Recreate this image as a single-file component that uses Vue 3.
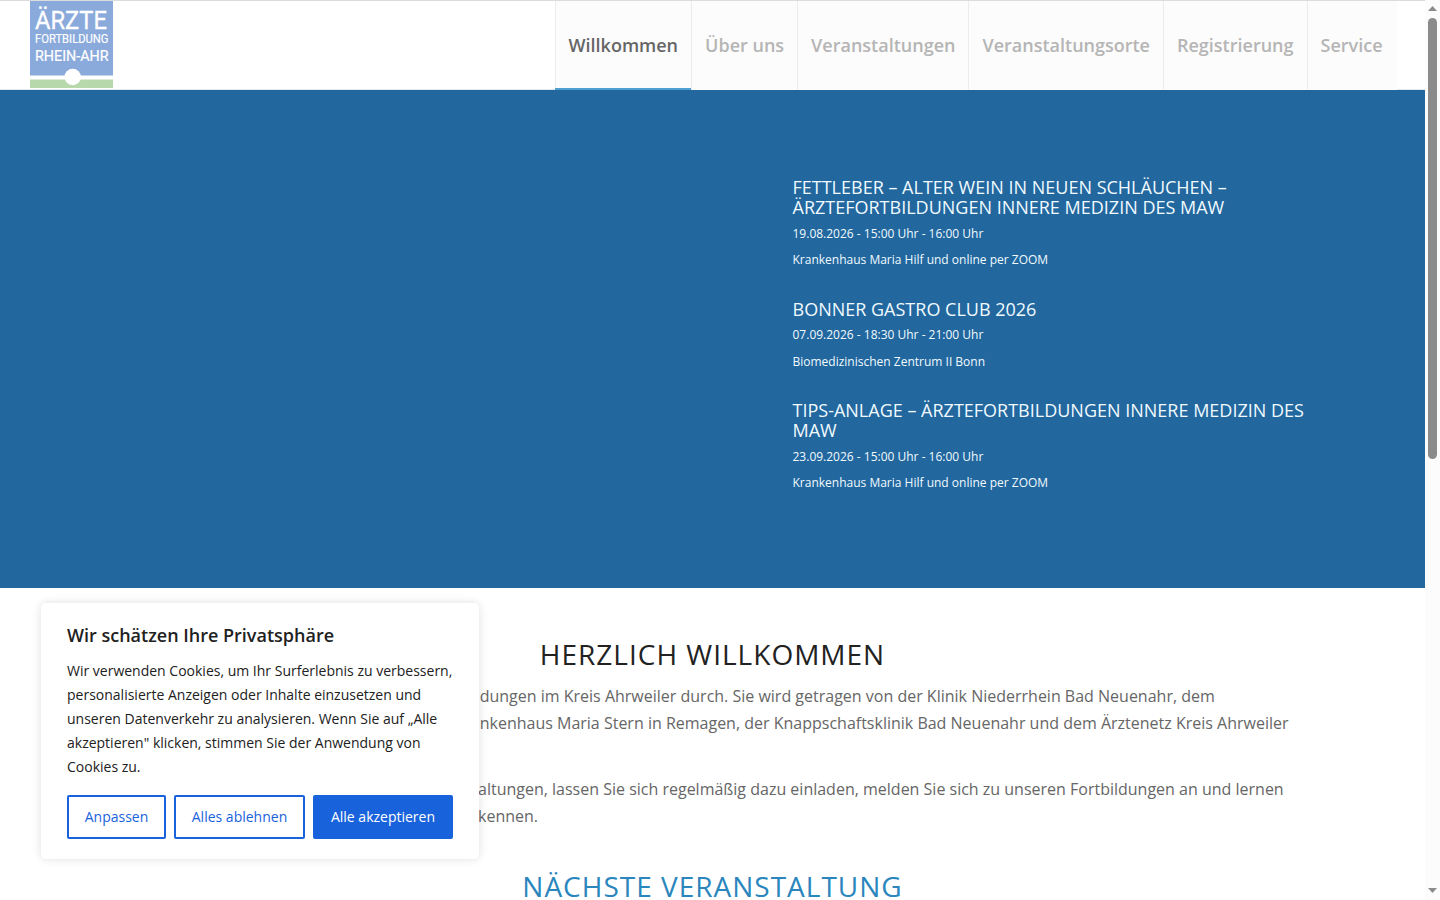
<script setup>
const nav = ['Willkommen', 'Über uns', 'Veranstaltungen', 'Veranstaltungsorte', 'Registrierung', 'Service']
const events = [
  { title: ['FETTLEBER – ALTER WEIN IN NEUEN SCHLÄUCHEN –', 'ÄRZTEFORTBILDUNGEN INNERE MEDIZIN DES MAW'], date: '19.08.2026 - 15:00 Uhr - 16:00 Uhr', place: 'Krankenhaus Maria Hilf und online per ZOOM' },
  { title: ['BONNER GASTRO CLUB 2026'], date: '07.09.2026 - 18:30 Uhr - 21:00 Uhr', place: 'Biomedizinischen Zentrum II Bonn' },
  { title: ['TIPS-ANLAGE – ÄRZTEFORTBILDUNGEN INNERE MEDIZIN DES', 'MAW'], date: '23.09.2026 - 15:00 Uhr - 16:00 Uhr', place: 'Krankenhaus Maria Hilf und online per ZOOM' },
]
const cookieText = ['Wir verwenden Cookies, um Ihr Surferlebnis zu verbessern,', 'personalisierte Anzeigen oder Inhalte einzusetzen und', 'unseren Datenverkehr zu analysieren. Wenn Sie auf „Alle', 'akzeptieren" klicken, stimmen Sie der Anwendung von', 'Cookies zu.']
</script>

<template>
  <div class="window">
    <div class="page">
      <header>
        <svg class="logo" width="84" height="88" viewBox="0 0 84 88">
          <rect x="0" y="1" width="83" height="74.500" fill="#8aaadb" />
          <rect x="0" y="79.500" width="83" height="8.500" fill="#b7d8ab" />
          <circle cx="42.700" cy="77" r="8.300" fill="#fff" />
          <g fill="#fff" font-family="Roboto, sans-serif">
            <text x="5" y="28.800" font-size="26.500" textLength="72" lengthAdjust="spacingAndGlyphs" stroke="#fff" stroke-width="0.300">ÄRZTE</text>
            <text x="5" y="43.200" font-size="12" textLength="73.500" lengthAdjust="spacingAndGlyphs" stroke="#fff" stroke-width="0.150">FORTBILDUNG</text>
            <text x="5" y="61" font-size="15" textLength="73.500" lengthAdjust="spacingAndGlyphs" stroke="#fff" stroke-width="0.200">RHEIN-AHR</text>
          </g>
        </svg>
        <nav>
          <a v-for="(n, i) in nav" :key="n" :class="{ active: i === 0 }">{{ n }}</a>
        </nav>
      </header>
      <section class="hero">
        <article v-for="e in events" :key="e.title[0]">
          <h3><span v-for="t in e.title" :key="t">{{ t }}</span></h3>
          <p>{{ e.date }}</p>
          <p>{{ e.place }}</p>
        </article>
      </section>
      <main>
        <h1>HERZLICH WILLKOMMEN</h1>
        <p class="body intro">
          <span>dungen im Kreis Ahrweiler durch. Sie wird getragen von der Klinik Niederrhein Bad Neuenahr, dem</span>
          <span>nkenhaus Maria Stern in Remagen, der Knappschaftsklinik Bad Neuenahr und dem Ärztenetz Kreis Ahrweiler</span>
        </p>
        <p class="body">
          <span>altungen, lassen Sie sich regelmäßig dazu einladen, melden Sie sich zu unseren Fortbildungen an und lernen</span>
          <span>kennen.</span>
        </p>
        <h1 class="next">NÄCHSTE VERANSTALTUNG</h1>
      </main>
    </div>
    <aside class="scroll">
      <svg width="15" height="900" viewBox="0 0 15 900">
        <path d="M3 11 L7.500 6 L12 11Z" fill="#8b8b8b" />
        <rect x="3" y="18" width="9" height="441" rx="4.500" fill="#8b8b8b" />
        <path d="M3 888 L12 888 L7.500 893Z" fill="#8b8b8b" />
      </svg>
    </aside>
    <div class="cookie">
      <h2>Wir schätzen Ihre Privatsphäre</h2>
      <p><span v-for="l in cookieText" :key="l">{{ l }}</span></p>
      <div class="buttons">
        <button class="b1">Anpassen</button>
        <button class="b2">Alles ablehnen</button>
        <button class="b3">Alle akzeptieren</button>
      </div>
    </div>
  </div>
</template>

<style>
body { margin: 0; overflow: hidden; }
</style>
<style scoped>
* { box-sizing: border-box; }
.window { position: relative; display: flex; width: 1440px; height: 900px; overflow: hidden; background: #fff; font-family: "Open Sans", sans-serif; }
.page { width: 1425px; height: 900px; overflow: hidden; }
h1, h2, h3, p { margin: 0; font-weight: 400; }
span { display: block; white-space: nowrap; }
header { height: 90px; display: flex; justify-content: space-between; padding: 0 28px 0 30px; border-top: 1px solid #dcdcdc; border-bottom: 1px solid #e4e8ec; }
.logo { display: block; margin-top: -1px; }
nav { display: flex; height: 89px; }
nav a { position: relative; padding: 0 13px; border-left: 1px solid #ececec; background: #fcfcfc; color: #b5b5b5; font-size: 18px; font-weight: 600; line-height: 89px; white-space: nowrap; }
nav a:last-child { padding-right: 14.500px; }
nav a.active { color: #666; }
nav a.active::after { content: ""; position: absolute; left: -1px; right: 0; bottom: 0; height: 2px; background: #4f9fd0; }
.hero { height: 498px; background: #22679e; color: #f0faff; padding: 87px 0 0 792.500px; }
article { margin-bottom: 28.600px; }
h3 { font-size: 18px; line-height: 20px; margin-bottom: 6.600px; }
article p { font-size: 12px; line-height: 20px; margin-bottom: 6.400px; }
main { padding-top: 48px; }
h1 { text-align: center; font-size: 28px; line-height: 36px; letter-spacing: 1px; color: #222; margin-bottom: 11px; white-space: nowrap; }
h1.next { color: #2a86bd; margin-top: -1px; }
.body { padding-left: 478px; font-size: 16px; line-height: 27px; color: #666; margin-bottom: 39px; }
.body.intro { padding-left: 479.700px; }
.scroll { width: 15px; background: #fcfcfc; }
.scroll svg { display: block; }
.cookie { position: absolute; left: 41px; top: 603px; width: 438px; height: 256px; padding: 19px 26px; border-radius: 5px; background: #fff; box-shadow: 0 0 10px #00000020; color: #212121; }
h2 { font-size: 18px; font-weight: 600; line-height: 26px; margin-bottom: 11px; }
.cookie p { font-size: 14px; line-height: 24px; margin-bottom: 16px; }
.buttons { display: flex; gap: 8px; }
button { height: 44px; padding: 0 0 2px; border: 2px solid #1863dc; border-radius: 2px; background: #fff; color: #1863dc; font: 14px "Open Sans", sans-serif; }
.b1 { width: 99px; }
.b2 { width: 131px; }
.b3 { width: 140px; background: #1863dc; color: #fff; }
</style>
